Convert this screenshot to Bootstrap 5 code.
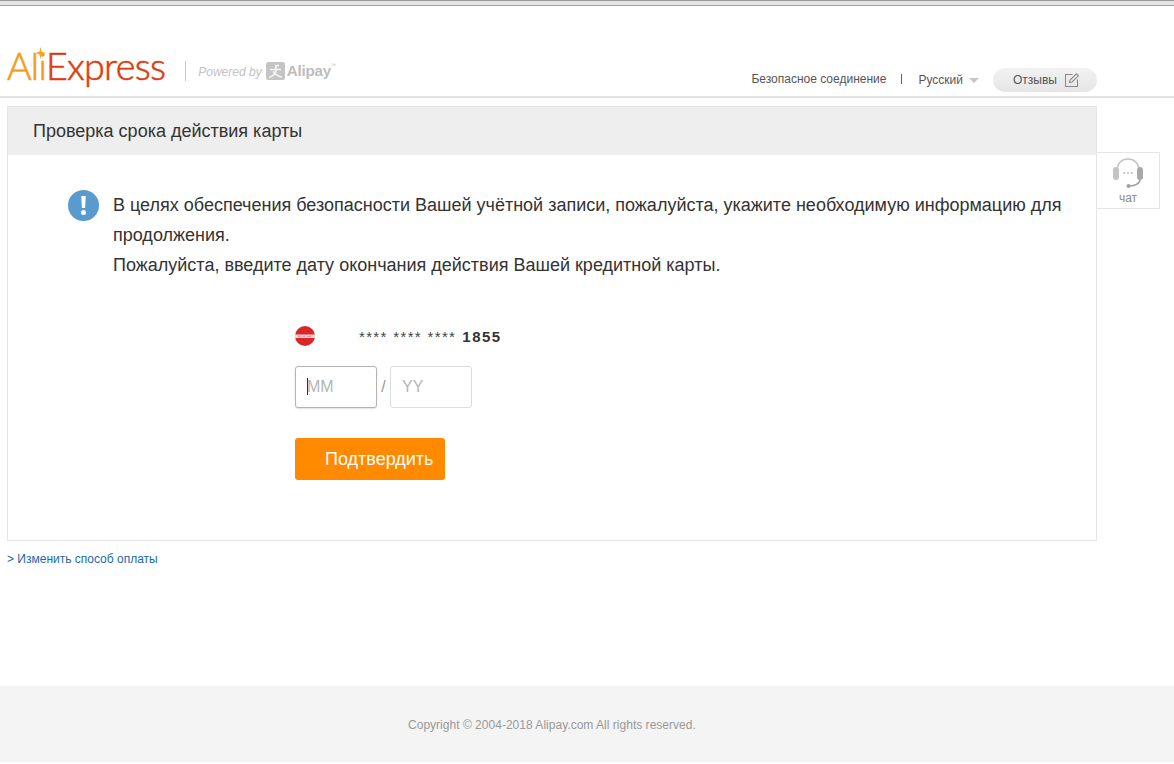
<!DOCTYPE html>
<html lang="ru">
<head>
<meta charset="utf-8">
<title>Alipay</title>
<link href="https://cdn.jsdelivr.net/npm/bootstrap@5.3.0/dist/css/bootstrap.min.css" rel="stylesheet">
<style>
html,body{height:100%}
body{font-family:"Liberation Sans",Arial,sans-serif;background:#fff;color:#333;height:764px;overflow:hidden;font-size:12px}
.topstripe{height:6px;background:#e4e4e4;border-top:1px solid #999;border-bottom:1px solid #a3a3a3;box-sizing:border-box}
.site-head{height:92px;border-bottom:2px solid #e3e3e3;padding-left:7px;width:100%}
.brand-box{padding-top:41px;width:1090px}
.logo-word{font-family:"Lato","Open Sans",sans-serif;font-weight:300;font-size:37.7px;line-height:38px;letter-spacing:-.7px;color:#dc3d10;-webkit-text-stroke:.6px #dc3d10}
.logo-ali{color:#f59a17;-webkit-text-stroke:.6px #f59a17}
.logo-star{left:28px;top:0}
.logo-sep{width:1px;height:20px;background:#c9c9c9;margin:14px 12px 0 20px}
.powered{font-style:italic;color:#c2c2c2;font-size:12px;margin-top:16px;letter-spacing:0}
.ali-mark{margin:15px 2px 0 4px}
.ali-word{font-weight:700;color:#bdbdbd;font-size:15.2px;line-height:18px;margin-top:15px;letter-spacing:-.2px}
.tm{font-size:5px;line-height:6px;color:#bdbdbd;margin-top:15px}
.head-right{margin-top:21px;font-size:12px;color:#555;line-height:14px}
.nudge-up{padding-bottom:2px}
.divider-bar{width:1px;height:10px;background:#666;margin:0 16px 2px 15px}
.caret-down{width:0;height:0;border-left:5px solid transparent;border-right:5px solid transparent;border-top:5px solid #c6c6c6;margin:0 14px 0 6px}
.fb-pill{width:104px;height:24px;border-radius:12px;background:linear-gradient(#f2f2f2,#e6e6e6);color:#555;font-size:12px;padding-left:20px}
.stage{margin:8px 0 0 7px;width:1090px}
.check-panel{border:1px solid #e6e6e6;height:435px;border-radius:0;width:1090px}
.check-title{height:48px;background:#eee;color:#333;font-size:18px;line-height:48px;padding-left:25px}
.notice{padding:35px 30px 0 60px;gap:14px}
.notice-text{font-size:18px;line-height:30px;color:#333;width:965px}
.info-dot{width:31px;height:31px;flex:none}
.card-form{margin-left:287px;margin-top:45px}
.card-line{height:22px}
.card-stars{margin-left:44px;font-size:15px;letter-spacing:1.35px;color:#444;line-height:22px;margin-top:1px}
.card-last{font-weight:700;font-size:15px;letter-spacing:1.5px;color:#333;margin-left:6px}
.date-row{margin-top:19px}
.date-field{width:82px;height:42px;border:1px solid #ddd;border-radius:3px;font-size:16px;color:#c0c0c0;padding:0 11px;line-height:40px;background:#fff;font-family:inherit}
.date-field::placeholder{color:#b5b5b5}
.date-field:focus{outline:0;border-color:#bbb}
.field-on{border-color:#b4b4b4;box-shadow:0 1px 2px rgba(0,0,0,.12)}
.slash{width:13px;text-align:center;color:#999;font-size:16px}
.fake-caret{left:12px;top:12px;width:1px;height:17px;background:#333}
.confirm-btn{width:150px;height:42px;margin-top:30px;background:#ff8a00;border:0;border-radius:3px;color:#fff;font-size:18px;line-height:42px;padding:0 0 0 30px;text-align:left}
.confirm-btn:hover{background:#ff8a00;color:#fff}
.chat-box{position:absolute;left:1090px;top:46px;width:63px;height:57px;border:1px solid #e6e6e6;border-left:0;background:#fff;color:#888;font-size:12px;text-align:center;padding-top:3px;line-height:14px}
.chat-box svg{display:block;margin:0 auto 3px}
.change-link{margin:11px 0 0 7px;font-size:12px;line-height:14px;color:#1a5fa8}
.change-link a{color:#1a6aa8;text-decoration:none}
.site-foot{position:absolute;left:0;right:0;top:686px;height:76px;background:#f4f4f4;color:#999;font-size:12px;line-height:78px;padding-left:408px;letter-spacing:.02px}
</style>
</head>
<body class="position-relative">
<div class="topstripe"></div>
<header class="site-head">
  <div class="brand-box d-flex justify-content-between">
    <div class="d-flex align-items-start">
      <div class="position-relative logo-word"><span class="logo-ali">Ali</span>Express
        <svg class="position-absolute logo-star" width="11" height="12" viewBox="0 0 11 12"><path d="M5.500 0 6.700 4.800 11 6 6.700 7.200 5.500 12 4.300 7.200 0 6 4.300 4.800Z" fill="#f5a623"/></svg>
      </div>
      <div class="logo-sep"></div>
      <div class="powered">Powered by</div>
      <svg class="ali-mark" width="19" height="18" viewBox="0 0 19 18"><rect width="19" height="18" rx="2.500" fill="#c4c4c4"/><path d="M9 3.500h4M4 7.500h11M10 3v5c0 3-3 6-7 7.500M7 9.500c2 2.500 5 5 9 5.500" stroke="#f4f4f4" stroke-width="1.700" fill="none"/></svg>
      <div class="ali-word">Alipay</div>
      <div class="tm">&trade;</div>
    </div>
    <div class="head-right d-flex align-items-center align-self-start">
      <span class="nudge-up">Безопасное соединение</span>
      <span class="divider-bar"></span>
      <span>Русский</span>
      <span class="caret-down"></span>
      <span class="fb-pill d-flex align-items-center">Отзывы
        <svg class="ms-2" width="14" height="14" viewBox="0 0 14 14" fill="none" stroke="#8a8a8a" stroke-width="1.100"><path d="M12.500 6.500v7H.5V1.500h7"/><path d="M4.500 9.500 5 7 11.500.8l2 2L7 9Z"/></svg>
      </span>
    </div>
  </div>
</header>
<main class="stage position-relative">
  <section class="check-panel">
    <div class="check-title">Проверка срока действия карты</div>
    <div class="notice d-flex">
      <svg class="info-dot" viewBox="0 0 31 31"><circle cx="15.500" cy="15.500" r="15.500" fill="#5a9bcf"/><path d="M13.200 6h4.600l-.7 12h-3.200Z" fill="#fff"/><circle cx="15.500" cy="22.500" r="2.500" fill="#fff"/></svg>
      <div class="notice-text">В целях обеспечения безопасности Вашей учётной записи, пожалуйста, укажите необходимую информацию для продолжения.<br>Пожалуйста, введите дату окончания действия Вашей кредитной карты.</div>
    </div>
    <div class="card-form">
      <div class="card-line d-flex align-items-center">
        <svg width="20" height="20" viewBox="0 0 20 20"><circle cx="10" cy="10" r="10" fill="#d9262a"/><path d="M0 8.500h20v3.500H0Z" fill="#f3d2d2"/><path d="M3 10.300h3M8 10.300h2M12 10.300h4" stroke="#e88" stroke-width="1"/></svg>
        <span class="card-stars">**** **** ****<span class="card-last">1855</span></span>
      </div>
      <div class="date-row d-flex align-items-center">
        <div class="position-relative"><input class="date-field field-on d-block" placeholder="MM" aria-label="MM"><span class="position-absolute fake-caret"></span></div>
        <span class="slash">/</span>
        <input class="date-field d-block" placeholder="YY" aria-label="YY">
      </div>
      <button class="btn confirm-btn d-block" type="button">Подтвердить</button>
    </div>
  </section>
  <aside class="chat-box">
    <svg width="32" height="32" viewBox="0 0 32 32" fill="none"><path d="M5 15C5 7 10 3 16 3s11 4 11 12" stroke="#c4c4c4" stroke-width="1.600"/><rect x="1" y="11" width="6" height="13" rx="3" fill="#c4c4c4"/><rect x="25" y="11" width="6" height="13" rx="3" fill="#a8a8a8"/><path d="M28 24c0 3-5 6-10 6" stroke="#a0a0a0" stroke-width="1.500"/><circle cx="16.500" cy="30" r="2" fill="#a0a0a0"/><path d="M11.500 17h1.600M15.200 17h1.600M18.900 17h1.600" stroke="#aaa" stroke-width="1.300"/></svg>
    чат
  </aside>
</main>
<div class="change-link">&gt; <a href="#">Изменить способ оплаты</a></div>
<footer class="site-foot">Copyright © 2004-2018 Alipay.com All rights reserved.</footer>
<script src="https://cdn.jsdelivr.net/npm/bootstrap@5.3.0/dist/js/bootstrap.bundle.min.js"></script>
</body>
</html>
